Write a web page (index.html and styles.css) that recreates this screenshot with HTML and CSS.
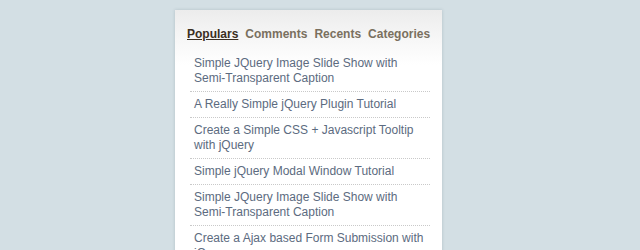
FILE: index.html
```html
<!DOCTYPE html>
<html>
<head>
<meta charset="utf-8">
<link rel="stylesheet" href="styles.css">
</head>
<body>
<div class="panel">
  <div class="tabs">
    <a class="tab active" href="#">Populars</a>
    <a class="tab" href="#">Comments</a>
    <a class="tab" href="#">Recents</a>
    <a class="tab" href="#">Categories</a>
  </div>
  <ul class="list">
    <li><a href="#">Simple JQuery Image Slide Show with Semi-Transparent Caption</a></li>
    <li><a href="#">A Really Simple jQuery Plugin Tutorial</a></li>
    <li><a href="#">Create a Simple CSS + Javascript Tooltip with jQuery</a></li>
    <li><a href="#">Simple jQuery Modal Window Tutorial</a></li>
    <li><a href="#">Simple JQuery Image Slide Show with Semi-Transparent Caption</a></li>
    <li><a href="#">Create a Ajax based Form Submission with jQuery</a></li>
  </ul>
</div>
</body>
</html>
```
FILE: styles.css
```css
html, body {
  margin: 0;
  padding: 0;
}
body {
  background: #d3dfe4;
  font-family: "Liberation Sans", Arial, sans-serif;
  font-size: 12px;
  line-height: 15px;
  height: 250px;
  overflow: hidden;
}
.panel {
  margin: 10px 0 0 175px;
  width: 243px;
  padding: 17px 12px 20px 12px;
  background: linear-gradient(to bottom, #ececec 0px, #f7f7f7 30px, #ffffff 55px, #ffffff 100%);
  box-shadow: 0 0 3px rgba(80, 100, 110, 0.25);
  min-height: 300px;
}
.tabs {
  display: flex;
  gap: 7px;
  font-weight: bold;
}
.tab {
  color: #7a705f;
  text-decoration: none;
}
.tab.active {
  color: #3b2f22;
  text-decoration: underline;
}
.list {
  list-style: none;
  margin: 9px 0 0 3px;
  padding: 0;
  width: 240px;
}
.list li {
  padding: 5px 4px;
  border-top: 1px dotted #c9c9c9;
}
.list li:first-child {
  border-top: none;
}
.list a {
  color: #5c6b80;
  text-decoration: none;
}
```
